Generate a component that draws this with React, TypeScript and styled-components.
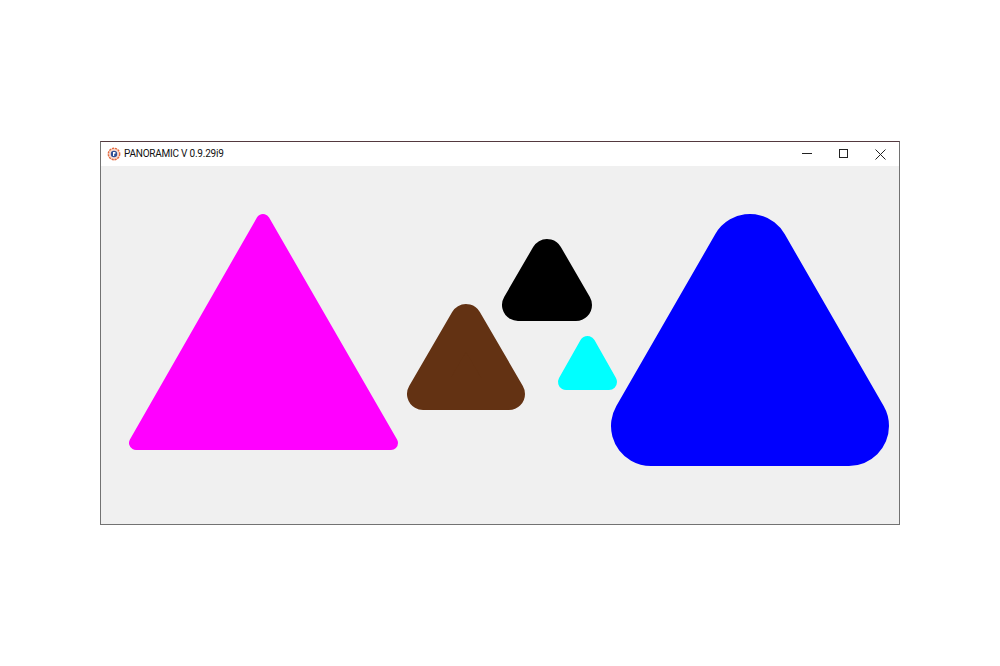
import React from "react";
import styled, { createGlobalStyle } from "styled-components";

const shapes = [
  { color: "#ff00ff", radius: 7, points: "263,221 136,443 391,443" },
  { color: "#633213", radius: 16, points: "466,320 423,394 509,394" },
  { color: "#000000", radius: 16, points: "547,255 518,305 576,305" },
  { color: "#00ffff", radius: 8, points: "587.5,344 566,382 609,382" },
  { color: "#0000ff", radius: 40, points: "750,254 651,426 849,426" },
];

export default function App() {
  return (
    <>
      <GlobalStyle />
      <Page>
        <Window>
          <TitleBar>
            <AppIcon viewBox="0 0 14 14">
              <circle cx="7" cy="7" r="5.7" fill="#f7d9cf" stroke="#e4693f" strokeWidth="1.4" strokeDasharray="2.2 0.8" />
              <circle cx="7" cy="7" r="3.2" fill="#2f4f96" />
              <path d="M6 5h2.4v1.7H7.2v2.3H6z" fill="#fff" />
            </AppIcon>
            <Title>PANORAMIC V 0.9.29i9</Title>
            <Controls>
              <ControlButton>
                <svg width="10" height="10" viewBox="0 0 10 10">
                  <path d="M0 4.5h10" stroke="#222" strokeWidth="1" />
                </svg>
              </ControlButton>
              <ControlButton>
                <svg width="10" height="10" viewBox="0 0 10 10">
                  <rect x="0.5" y="0.5" width="8" height="8" fill="none" stroke="#222" strokeWidth="1" />
                </svg>
              </ControlButton>
              <ControlButton>
                <svg width="11" height="11" viewBox="0 0 11 11">
                  <path d="M.5.5l10 10M10.5.5l-10 10" stroke="#222" strokeWidth="1" />
                </svg>
              </ControlButton>
            </Controls>
          </TitleBar>
          <Client>
            <Canvas viewBox="101 166 798 358">
              {shapes.map((s) => (
                <Triangle key={s.color} points={s.points} $color={s.color} $radius={s.radius} />
              ))}
            </Canvas>
          </Client>
        </Window>
      </Page>
    </>
  );
}

const GlobalStyle = createGlobalStyle`
  html, body {
    margin: 0;
    padding: 0;
    background: #fff;
  }
`;

const Page = styled.div`
  height: 100vh;
  display: flex;
  align-items: center;
  justify-content: center;
`;

const Window = styled.div`
  width: 800px;
  height: 384px;
  box-sizing: border-box;
  display: flex;
  flex-direction: column;
  border: 1px solid #727272;
  border-top-color: #54393f;
`;

const TitleBar = styled.div`
  height: 24px;
  flex: none;
  display: flex;
  align-items: center;
  padding-left: 6px;
  background: #fff;
`;

const AppIcon = styled.svg`
  width: 14px;
  height: 14px;
  flex: none;
  margin-right: 3px;
  margin-top: -1px;
`;

const Title = styled.span`
  font-family: Roboto, "Liberation Sans", sans-serif;
  font-size: 10px;
  letter-spacing: -0.22px;
  line-height: 12px;
  margin-top: -1px;
  color: #111;
  white-space: nowrap;
`;

const Controls = styled.div`
  margin-left: auto;
  display: flex;
  height: 100%;
`;

const ControlButton = styled.div`
  width: 37px;
  display: flex;
  align-items: center;
  justify-content: center;
`;

const Client = styled.div`
  flex: 1;
  min-height: 0;
  background: #f0f0f0;
`;

const Canvas = styled.svg`
  display: block;
  width: 100%;
  height: 100%;
`;

const Triangle = styled.polygon<{ $color: string; $radius: number }>`
  fill: ${(p) => p.$color};
  stroke: ${(p) => p.$color};
  stroke-width: ${(p) => p.$radius * 2}px;
  stroke-linejoin: round;
`;
